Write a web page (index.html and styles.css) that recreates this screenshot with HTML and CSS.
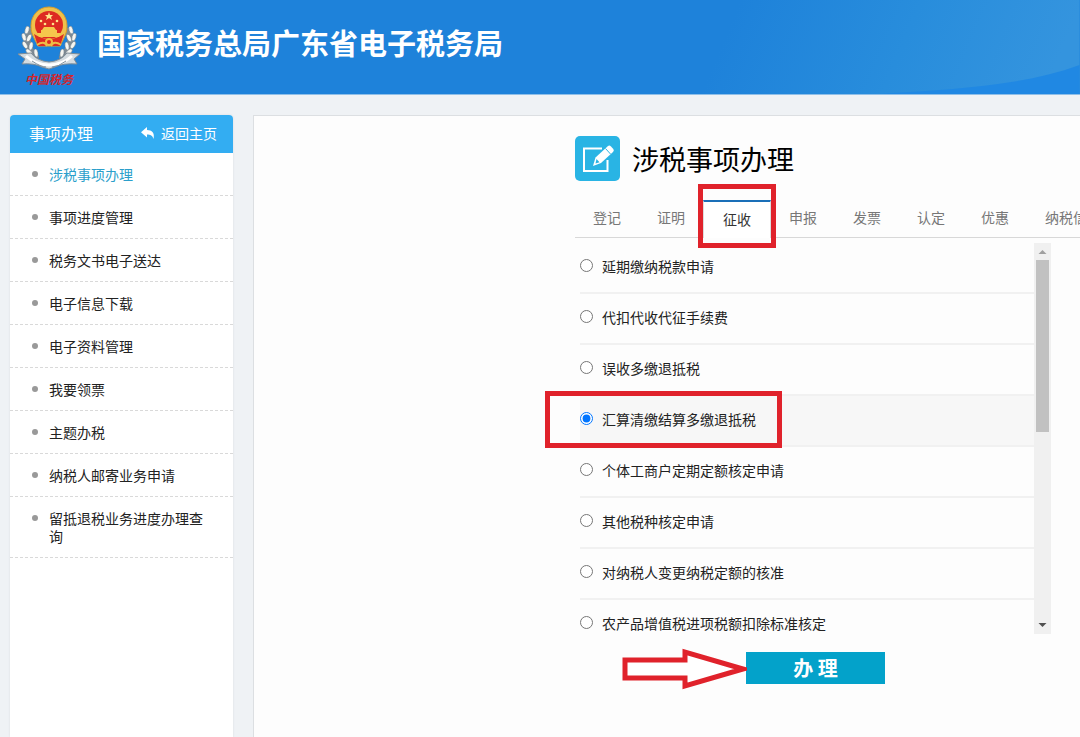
FILE: index.html
```html
<!DOCTYPE html>
<html lang="zh-CN">
<head>
  <meta charset="UTF-8" />
  <meta name="viewport" content="width=device-width, initial-scale=1.0"/>
  <title>国家税务总局广东省电子税务局</title>
  <link rel="stylesheet" href="styles.css">
</head>
<body>

  <header class="top">
    <svg class="top-bg" viewBox="0 0 400 94" preserveAspectRatio="none" aria-hidden="true">
      <defs>
        <linearGradient id="glow" x1="0" y1="0" x2="1" y2="0.1">
          <stop offset="0.15" stop-color="#1e82da"/>
          <stop offset="0.6" stop-color="#288ddc"/>
          <stop offset="1" stop-color="#3494de"/>
        </linearGradient>
      </defs>
      <rect width="400" height="94" fill="url(#glow)"/>
      <path d="M200 94C270 89 340 87 400 65V94Z" fill="#2088e3"/>
    </svg>
    <div class="logo">
      <svg width="64" height="66" viewBox="0 0 64 66" aria-hidden="true">
        <!-- wheat ears -->
        <g fill="none" stroke="#7d8a94" stroke-width="6" stroke-linecap="round">
          <path d="M13 25Q6 37 19 51"/><path d="M51 25Q58 37 45 51"/>
        </g>
        <g fill="#f6f6f1" stroke="#66737e" stroke-width="0.5">
          <ellipse cx="10" cy="24" rx="2" ry="4" transform="rotate(15 10 24)"/><ellipse cx="54" cy="24" rx="2" ry="4" transform="rotate(-15 54 24)"/>
          <ellipse cx="7" cy="31" rx="2" ry="4" transform="rotate(-15 7 31)"/><ellipse cx="57" cy="31" rx="2" ry="4" transform="rotate(15 57 31)"/>
          <ellipse cx="12" cy="32" rx="2" ry="4" transform="rotate(25 12 32)"/><ellipse cx="52" cy="32" rx="2" ry="4" transform="rotate(-25 52 32)"/>
          <ellipse cx="8" cy="39" rx="2" ry="4" transform="rotate(-30 8 39)"/><ellipse cx="56" cy="39" rx="2" ry="4" transform="rotate(30 56 39)"/>
          <ellipse cx="14" cy="40" rx="2" ry="4" transform="rotate(10 14 40)"/><ellipse cx="50" cy="40" rx="2" ry="4" transform="rotate(-10 50 40)"/>
          <ellipse cx="12" cy="46" rx="2" ry="4" transform="rotate(-45 12 46)"/><ellipse cx="52" cy="46" rx="2" ry="4" transform="rotate(45 52 46)"/>
          <ellipse cx="19" cy="47" rx="2" ry="4" transform="rotate(-10 19 47)"/><ellipse cx="45" cy="47" rx="2" ry="4" transform="rotate(10 45 47)"/>
        </g>
        <!-- ribbon -->
        <path d="M1 48L14 47Q20 55 32 56Q44 55 50 47L63 48L57 53L60 58Q46 57 38 61L32 63L25 61Q17 57 5 58L8 53Z" fill="#d5dce0" stroke="#7f8d97"/>
        <path d="M9 50Q19 59 32 59Q45 59 55 50" fill="none" stroke="#fff" stroke-width="3"/>
        <path d="M15 55Q24 61 29 61M49 55Q41 61 35 61" fill="none" stroke="#83919b"/>
        <!-- national emblem -->
        <path d="M32 1C43 1 50 10 50 20C50 29 45 35 43 40H21C19 35 14 29 14 20C14 10 21 1 32 1Z" fill="#efc14b" stroke="#d99e2b"/>
        <circle cx="32" cy="19" r="14" fill="#dd2a22"/>
        <path d="M17 28Q32 38 47 28L43 40H21Z" fill="#dd2a22"/>
        <path d="M20 27H44L42 31H22ZM24 24H40V27H24ZM27 21H37L39 24H25Z" fill="#f5c84c"/>
        <path d="M32 6L33 9H36L34 11L35 14L32 12L29 14L30 11L28 9H31Z" fill="#ffe48a"/>
        <g fill="#ffe48a"><circle cx="24" cy="15" r="1.3"/><circle cx="40" cy="15" r="1.3"/><circle cx="28" cy="18" r="1.3"/><circle cx="36" cy="18" r="1.3"/></g>
        <circle cx="32" cy="36" r="4" fill="#f0bd43"/><circle cx="32" cy="36" r="2" fill="#dd2a22"/>
        <path d="M20 39Q27 34 30 40M44 39Q37 34 34 40" fill="none" stroke="#edbd46" stroke-width="2"/>
      </svg>
      <span class="logo-text">中国税务</span>
    </div>
    <h1>国家税务总局广东省电子税务局</h1>
  </header>

  <div class="wrap">
    <nav class="side">
      <div class="side-head">
        <h2>事项办理</h2>
        <a href="#" class="back">
          <svg width="14" height="12" viewBox="0 0 14 12" aria-hidden="true"><path d="M6 0V3C11 3 14 6 12.500 12C11.500 8.500 9.500 7.500 6 7.500V10.500L0 5.200Z" fill="#fff"/></svg>
          返回主页
        </a>
      </div>
      <ul class="menu">
        <li class="on"><a href="#">涉税事项办理</a></li>
        <li><a href="#">事项进度管理</a></li>
        <li><a href="#">税务文书电子送达</a></li>
        <li><a href="#">电子信息下载</a></li>
        <li><a href="#">电子资料管理</a></li>
        <li><a href="#">我要领票</a></li>
        <li><a href="#">主题办税</a></li>
        <li><a href="#">纳税人邮寄业务申请</a></li>
        <li><a href="#">留抵退税业务进度办理查询</a></li>
      </ul>
    </nav>

    <main class="main">
      <div class="title">
        <svg width="45" height="45" viewBox="0 0 45 45" aria-hidden="true">
          <rect width="45" height="45" rx="5" fill="#29b4e4"/>
          <path d="M27 12.500H9V35H32.500V24" fill="none" stroke="#fff" stroke-width="2"/>
          <path d="M33 10Q34.500 9 36 10.500L38.300 13Q39.500 14.500 38 16L26 27L18 30L20.500 21.500Z" fill="#fff"/>
          <path d="M30.500 12.500L35.500 18" stroke="#29b4e4"/>
          <path d="M21.500 23L24.500 26.200L20.500 27.500Z" fill="#29b4e4"/>
        </svg>
        <h2>涉税事项办理</h2>
      </div>

      <div class="tabs">
        <button type="button">登记</button>
        <button type="button">证明</button>
        <button type="button" class="active">征收<span class="mark"></span></button>
        <button type="button">申报</button>
        <button type="button">发票</button>
        <button type="button">认定</button>
        <button type="button">优惠</button>
        <button type="button">纳税信用</button>
      </div>

      <form class="form">
        <div class="list-box">
          <div class="list">
            <label><input type="radio" name="item">延期缴纳税款申请</label>
            <label><input type="radio" name="item">代扣代收代征手续费</label>
            <label><input type="radio" name="item">误收多缴退抵税</label>
            <label class="checked"><input type="radio" name="item" checked>汇算清缴结算多缴退抵税<span class="mark"></span></label>
            <label><input type="radio" name="item">个体工商户定期定额核定申请</label>
            <label><input type="radio" name="item">其他税种核定申请</label>
            <label><input type="radio" name="item">对纳税人变更纳税定额的核准</label>
            <label><input type="radio" name="item">农产品增值税进项税额扣除标准核定</label>
          </div>
          <div class="scrollbar" aria-hidden="true">
            <svg width="17" height="17" viewBox="0 0 17 17"><path d="M4.500 11L8.500 7L12.500 11Z" fill="#a0a0a0"/></svg>
            <div class="thumb"></div>
            <svg width="17" height="17" viewBox="0 0 17 17"><path d="M4.500 6L8.500 10L12.500 6Z" fill="#505050"/></svg>
          </div>
        </div>
        <div class="action">
          <button type="button" class="submit">办 理
            <svg class="arrow" width="126" height="42" viewBox="0 0 126 42" aria-hidden="true"><path d="M4 12H64V4L122 21L64 38V30H4Z" fill="#fff" stroke="#e0222b" stroke-width="5"/></svg>
          </button>
        </div>
      </form>
    </main>
  </div>

</body>
</html>
```

FILE: styles.css
```css
body {
  margin: 0;
  min-height: 100vh;
  display: flex;
  flex-direction: column;
  font-family: "Noto Sans CJK SC", sans-serif;
  font-size: 14px;
  line-height: 18px;
  background: #eff2f5;
  color: #222;
}

h1, h2, ul {
  margin: 0;
  padding: 0;
}

a {
  color: inherit;
  text-decoration: none;
}

button {
  font-family: inherit;
  cursor: pointer;
}

svg {
  display: block;
  flex: none;
}

/* Header */
.top {
  position: relative;
  display: flex;
  align-items: flex-start;
  gap: 16px;
  height: 94px;
  padding-left: 17px;
  background: #1e82da;
  border-bottom: 1px solid #8fbfe8;
}

.top-bg {
  position: absolute;
  right: 0;
  top: 0;
  width: 37%;
  height: 100%;
}

.logo {
  position: relative;
  padding-top: 6px;
  text-align: center;
}

.logo-text {
  display: block;
  font-size: 12px;
  line-height: 14px;
  font-weight: bold;
  font-style: italic;
  color: #d3262d;
}

.top h1 {
  position: relative;
  font-size: 29px;
  line-height: 84px;
  color: #fff;
  white-space: nowrap;
}

.wrap {
  flex: 1;
  display: flex;
  gap: 20px;
  padding: 20px 0 0 10px;
  overflow: hidden;
}

/* Left menu */
.side {
  flex: none;
  width: 223px;
  background: #fff;
  border-radius: 4px 4px 0 0;
  box-shadow: 0 0 2px #d5d9dc;
}

.side-head {
  display: flex;
  align-items: center;
  justify-content: space-between;
  height: 36px;
  padding: 0 16px 2px 19px;
  border-radius: 4px 4px 0 0;
  background: #33adf2;
  color: #fff;
}

.side-head h2 {
  font-size: 16px;
  font-weight: normal;
}

.back {
  display: flex;
  align-items: center;
  gap: 6px;
}

.menu {
  list-style: none;
}

.menu li {
  display: flex;
  gap: 11px;
  padding: 12px 20px 12px 22px;
  border-bottom: 1px dashed #d9d9d9;
}

.menu li::before {
  content: "";
  flex: none;
  width: 6px;
  height: 6px;
  margin-top: 6px;
  border-radius: 50%;
  background: #999;
}

.menu .on {
  color: #2b9fcb;
}

/* Content */
.main {
  flex: 1;
  min-width: 0;
  padding: 20px 0 0 321px;
  border: 1px solid #dcdfe2;
  border-width: 1px 0 0 1px;
  background: #fdfdfd;
  overflow: hidden;
}

.title {
  display: flex;
  align-items: center;
  gap: 12px;
}

.title h2 {
  font-size: 27px;
  line-height: 45px;
  font-weight: normal;
  color: #000;
}

.tabs {
  display: flex;
  align-items: flex-end;
  height: 56px;
  border-bottom: 1px solid #d8d8d8;
}

.tabs button {
  flex: none;
  height: 38px;
  padding: 0 18px 3px;
  border: 0;
  background: none;
  font-size: 14px;
  color: #777;
}

.tabs .active {
  position: relative;
  padding: 0 19px 3px;
  margin-bottom: -1px;
  border: 1px solid #ddd;
  border-top: 2px solid #1a6fb8;
  border-bottom: 0;
  background: #fff;
  color: #333;
}

.mark {
  position: absolute;
  border: 5px solid #e0222b;
}

.tabs .mark {
  inset: -18px -6px -10px;
}

.form {
  width: 471px;
  padding: 5px 0 0 5px;
}

.list-box {
  display: flex;
  height: 391px;
}

.list {
  flex: 1;
  overflow-x: visible;
  overflow-y: clip;
}

.list label {
  position: relative;
  display: flex;
  align-items: center;
  gap: 9px;
  height: 45px;
  padding-bottom: 4px;
  border-bottom: 2px solid #f1f1f1;
}

.list input {
  width: 13px;
  height: 13px;
  margin: 0;
}

.list .checked {
  background: #f7f7f7;
}

.list .mark {
  left: -35px;
  top: -5px;
  bottom: -3px;
  width: 227px;
}

.scrollbar {
  display: flex;
  flex-direction: column;
  width: 17px;
  background: #f0f0f0;
}

.thumb {
  height: 172px;
  margin: 0 2px auto;
  background: #c1c1c1;
}

.action {
  display: flex;
  justify-content: center;
  padding-top: 18px;
}

.submit {
  position: relative;
  width: 139px;
  height: 32px;
  padding: 0 0 2px;
  border: 0;
  background: #03a2ca;
  color: #fff;
  font-size: 20px;
  font-weight: bold;
}

.arrow {
  position: absolute;
  right: 138px;
  top: -4px;
}
```
